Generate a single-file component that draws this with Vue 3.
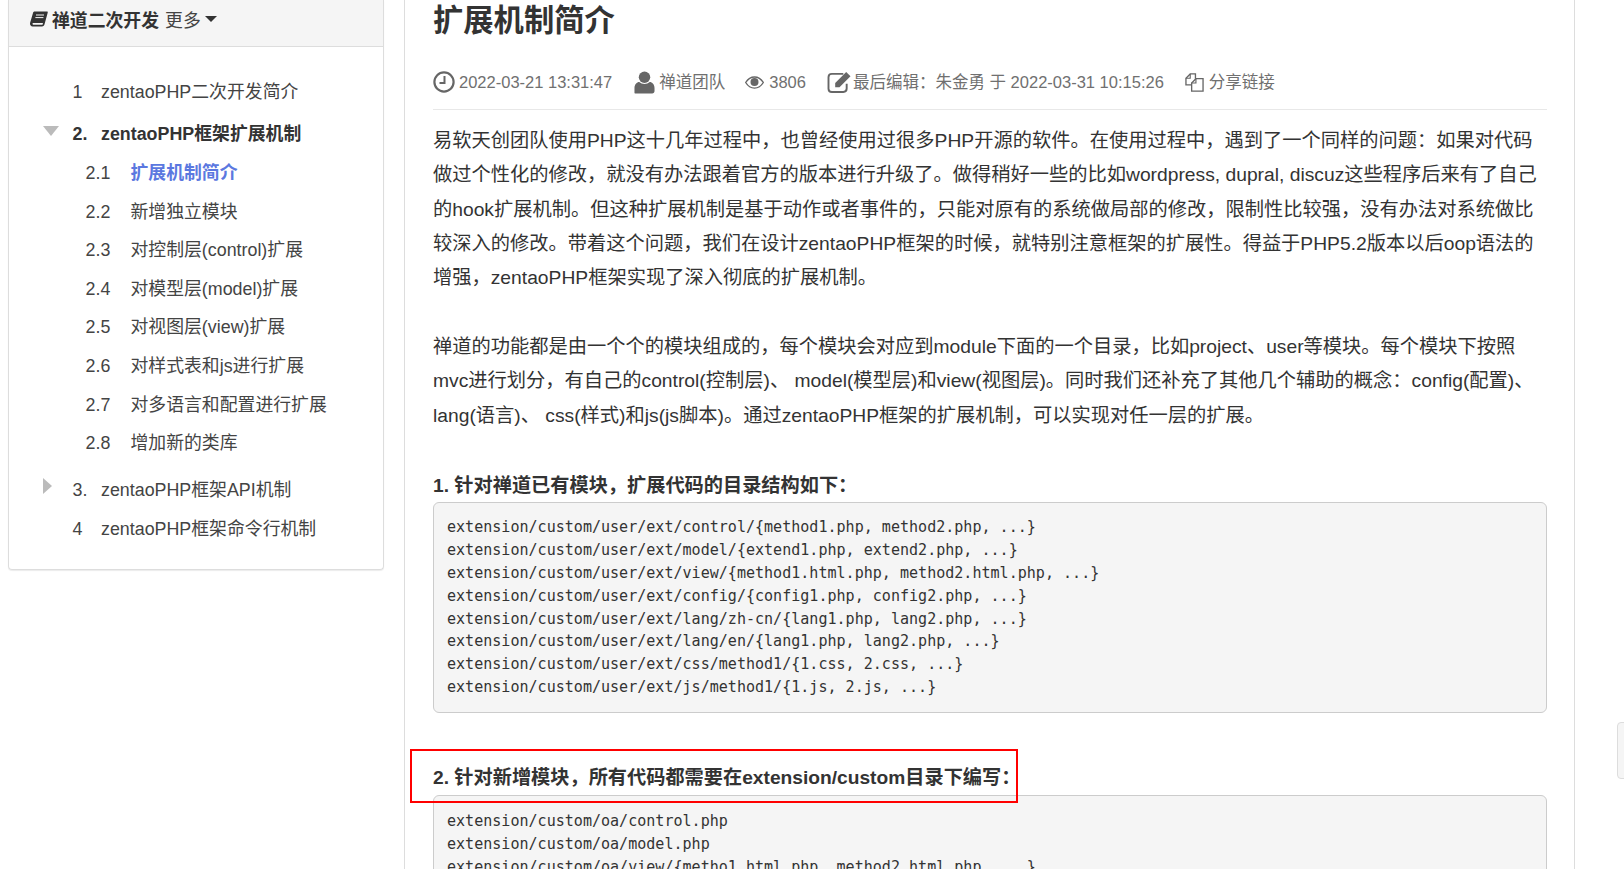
<script setup>
const subs = [
  ['2.1', '扩展机制简介', true],
  ['2.2', '新增独立模块'],
  ['2.3', '对控制层(control)扩展'],
  ['2.4', '对模型层(model)扩展'],
  ['2.5', '对视图层(view)扩展'],
  ['2.6', '对样式表和js进行扩展'],
  ['2.7', '对多语言和配置进行扩展'],
  ['2.8', '增加新的类库'],
]
const code1 = `extension/custom/user/ext/control/{method1.php, method2.php, ...}
extension/custom/user/ext/model/{extend1.php, extend2.php, ...}
extension/custom/user/ext/view/{method1.html.php, method2.html.php, ...}
extension/custom/user/ext/config/{config1.php, config2.php, ...}
extension/custom/user/ext/lang/zh-cn/{lang1.php, lang2.php, ...}
extension/custom/user/ext/lang/en/{lang1.php, lang2.php, ...}
extension/custom/user/ext/css/method1/{1.css, 2.css, ...}
extension/custom/user/ext/js/method1/{1.js, 2.js, ...}`
const code2 = `extension/custom/oa/control.php
extension/custom/oa/model.php
extension/custom/oa/view/{metho1.html.php, method2.html.php, ...}`
</script>

<template>
  <div class="page">
    <aside class="side">
      <div class="panel">
        <div class="panel-head">
          <svg class="book" viewBox="0 0 18 16" width="18" height="16">
            <path d="M4.600 0.600H17c.6 0 .9.5.7 1.100L14.600 13c-.3 1.200-1.200 2.400-2.600 2.400H2.600C1 15.400 0 14.200 0 12.800c0-.4.100-.8.200-1.200L3 2c.2-.8.800-1.400 1.600-1.400z" fill="#333"/>
            <path d="M2.800 12h10.200l-.5 1.800H3.200c-.7 0-.9-1.300-.4-1.800z" fill="#f5f5f5"/>
            <path d="M6 4h8M5.400 6.600h8" stroke="#f5f5f5" stroke-width="1"/>
          </svg>
          <b class="head-title">禅道二次开发</b>
          <span class="head-more">更多</span>
          <i class="caret"></i>
        </div>
        <ul class="tree">
          <li class="top"><span class="num">1</span><span>zentaoPHP二次开发简介</span></li>
          <li class="top open"><i class="tri-down"></i><span class="num">2.</span><span>zentaoPHP框架扩展机制</span></li>
          <li v-for="s in subs" :key="s[0]" class="sub" :class="{ active: s[2] }">
            <span class="subnum">{{ s[0] }}</span><span class="subtext">{{ s[1] }}</span>
          </li>
          <li class="top third"><i class="tri-right"></i><span class="num">3.</span><span>zentaoPHP框架API机制</span></li>
          <li class="top"><span class="num">4</span><span>zentaoPHP框架命令行机制</span></li>
        </ul>
      </div>
    </aside>

    <main class="article">
      <h1 class="title">扩展机制简介</h1>
      <div class="meta">
        <span class="mi">
          <svg viewBox="0 0 22 22" width="22" height="22"><circle cx="11" cy="11" r="9.600" fill="none" stroke="#666" stroke-width="2.200"/><path d="M11.500 5v7H6.500" fill="none" stroke="#666" stroke-width="2"/></svg>
          <span>2022-03-21 13:31:47</span>
        </span>
        <span class="mi m2">
          <svg viewBox="0 0 22 24" width="21" height="23"><circle cx="11" cy="6.500" r="6" fill="#666"/><path d="M0.500 23v-5c0-4 2.500-6.500 5-6.500 1.500 1.300 3.400 2 5.500 2s4-.7 5.500-2c2.500 0 5 2.500 5 6.500v3c0 1.500-1 2.500-2.500 2.500H2.500C1.500 23.500.500 23.500.500 23z" fill="#666"/></svg>
          <span>禅道团队</span>
        </span>
        <span class="mi m3">
          <svg viewBox="0 0 20 14" width="19" height="13"><path d="M0.500 7C3 3 6.200 1 10 1s7 2 9.500 6c-2.500 4-5.700 6-9.500 6S3 11 .5 7z" fill="none" stroke="#666" stroke-width="1.500"/><circle cx="10" cy="6.500" r="4.300" fill="#666"/></svg>
          <span>3806</span>
        </span>
        <span class="mi m4">
          <svg viewBox="0 0 26 23" width="25" height="22"><path d="M17 3H5C2.800 3 1.500 4.400 1.500 6.500v12c0 2 1.300 3.400 3.500 3.400h12c2 0 3.500-1.400 3.500-3.500v-5" fill="none" stroke="#666" stroke-width="2"/><path d="M8.500 12.500 20 1l4.500 4.500L13 17H8.500z" fill="#666"/></svg>
          <span>最后编辑：朱金勇 于 2022-03-31 10:15:26</span>
        </span>
        <span class="mi m5">
          <svg viewBox="0 0 20 20" width="19" height="19"><path d="M7 12.500H1V5.500L5.500 1H11v5" fill="none" stroke="#666" stroke-width="1.400"/><path d="M1 5.500h4.500V1" fill="none" stroke="#666" stroke-width="1.200"/><path d="M7 19V10.500L11.500 6H19v13z" fill="#fff" stroke="#666" stroke-width="1.400"/><path d="M7 10.500h4.500V6" fill="none" stroke="#666" stroke-width="1.200"/></svg>
          <span>分享链接</span>
        </span>
      </div>
      <p class="para">易软天创团队使用PHP这十几年过程中，也曾经使用过很多PHP开源的软件。在使用过程中，遇到了一个同样的问题：如果对代码<br>做过个性化的修改，就没有办法跟着官方的版本进行升级了。做得稍好一些的比如wordpress, dupral, discuz这些程序后来有了自己<br>的hook扩展机制。但这种扩展机制是基于动作或者事件的，只能对原有的系统做局部的修改，限制性比较强，没有办法对系统做比<br>较深入的修改。带着这个问题，我们在设计zentaoPHP框架的时候，就特别注意框架的扩展性。得益于PHP5.2版本以后oop语法的<br>增强，zentaoPHP框架实现了深入彻底的扩展机制。</p>
      <p class="para second">禅道的功能都是由一个个的模块组成的，每个模块会对应到module下面的一个目录，比如project、user等模块。每个模块下按照<br>mvc进行划分，有自己的control(控制层)、 model(模型层)和view(视图层)。同时我们还补充了其他几个辅助的概念：config(配置)、<br>lang(语言)、 css(样式)和js(js脚本)。通过zentaoPHP框架的扩展机制，可以实现对任一层的扩展。</p>
      <h4 class="h4 first">1. 针对禅道已有模块，扩展代码的目录结构如下：</h4>
      <pre class="code">{{ code1 }}</pre>
      <h4 class="h4 next">2. 针对新增模块，所有代码都需要在extension/custom目录下编写：</h4>
      <pre class="code code-b">{{ code2 }}</pre>
      <div class="redbox"></div>
    </main>
    <div class="edge-tab"></div>
  </div>
</template>

<style>
html, body { margin: 0; overflow: hidden; background: #fff; }
</style>

<style scoped>
.page {
  position: relative;
  display: flex;
  height: 869px;
  overflow: hidden;
  font-family: "Liberation Sans", "Noto Sans CJK SC", sans-serif;
  color: #333;
}
.side { width: 404px; flex: none; padding-left: 8px; box-sizing: border-box; }
.panel {
  width: 376px;
  box-sizing: border-box;
  border: 1px solid #ddd;
  border-top: 0;
  border-radius: 0 0 4px 4px;
  box-shadow: 0 1px 1px rgba(0,0,0,.08);
  padding-bottom: 21px;
}
.panel-head {
  height: 47px;
  box-sizing: border-box;
  padding: 0 0 8px 21px;
  display: flex;
  align-items: center;
  background: #f5f5f5;
  border-bottom: 1px solid #ddd;
  font-size: 17.850px;
}
.book { margin-right: 4px; }
.head-title { font-weight: 700; }
.head-more { margin-left: 6px; color: #444; }
.caret {
  margin-left: 4px;
  border-left: 6px solid transparent;
  border-right: 6px solid transparent;
  border-top: 6px solid #333;
}
.tree { list-style: none; margin: 0; padding: 26px 0 0; font-size: 17.850px; }
.top { position: relative; height: 38px; line-height: 38px; padding-left: 63.500px; display: flex; color: #444; }
.top + .top { margin-top: 4px; }
.num { width: 28.500px; flex: none; }
.open { font-weight: 700; color: #333; margin-bottom: 1px; }
.third { margin-top: 8px; }
.third + .top { margin-top: 1px; }
.tri-down {
  position: absolute; left: 34px; top: 11px;
  border-left: 8.500px solid transparent;
  border-right: 8.500px solid transparent;
  border-top: 10px solid #bbb;
}
.tri-right {
  position: absolute; left: 34px; top: 7.500px;
  border-top: 8px solid transparent;
  border-bottom: 8px solid transparent;
  border-left: 9.500px solid #bbb;
}
.sub { height: 38.600px; line-height: 38.600px; padding-left: 76.500px; display: flex; color: #444; }
.subnum { width: 45px; flex: none; }
.active .subtext { color: #5b78e0; font-weight: 700; }

.article {
  position: relative;
  width: 1171px;
  flex: none;
  box-sizing: border-box;
  border-left: 1px solid #ddd;
  border-right: 1px solid #ddd;
  padding-left: 28px;
  padding-right: 27px;
}
.title { margin: 0; font-size: 30.300px; line-height: 41px; font-weight: 700; color: #333; }
.meta {
  height: 69px;
  padding-top: 21px;
  box-sizing: border-box;
  display: flex;
  align-items: flex-start;
  border-bottom: 1px solid #e8e8e8;
  font-size: 16.500px;
  line-height: 40px;
  color: #707070;
}
.mi { display: flex; align-items: center; height: 40px; gap: 4px; white-space: nowrap; }
.m2 { margin-left: 22px; }
.m3 { margin-left: 20px; gap: 5px; }
.m4 { margin-left: 21px; gap: 1px; }
.m5 { margin-left: 21px; gap: 5px; }
.para { margin: 14px 0 0; font-size: 19.260px; line-height: 34.300px; color: #333; white-space: nowrap; }
.second { margin-top: 34.500px; }
.h4 { margin: 0; font-size: 19.200px; line-height: 24px; font-weight: 700; color: #333; }
.first { margin-top: 41px; }
.next { margin-top: 53px; }
.code {
  margin: 4px 0 0;
  padding: 13px 13px;
  height: 211px;
  box-sizing: border-box;
  background: #f5f5f5;
  border: 1px solid #ccc;
  border-radius: 6px;
  font-family: "DejaVu Sans Mono", monospace;
  font-size: 15.050px;
  line-height: 22.900px;
  color: #333;
  overflow: hidden;
}
.code-b { padding-top: 14px; }
.next + .code { margin-top: 5px; }
.redbox {
  position: absolute;
  left: 5px;
  top: 749px;
  width: 608px;
  height: 54px;
  box-sizing: border-box;
  border: 2px solid #f00;
}
.edge-tab {
  position: absolute;
  left: 1617px;
  top: 722px;
  width: 12px;
  height: 57px;
  box-sizing: border-box;
  background: #f5f5f5;
  border: 1px solid #ddd;
  border-radius: 4px;
}
</style>
